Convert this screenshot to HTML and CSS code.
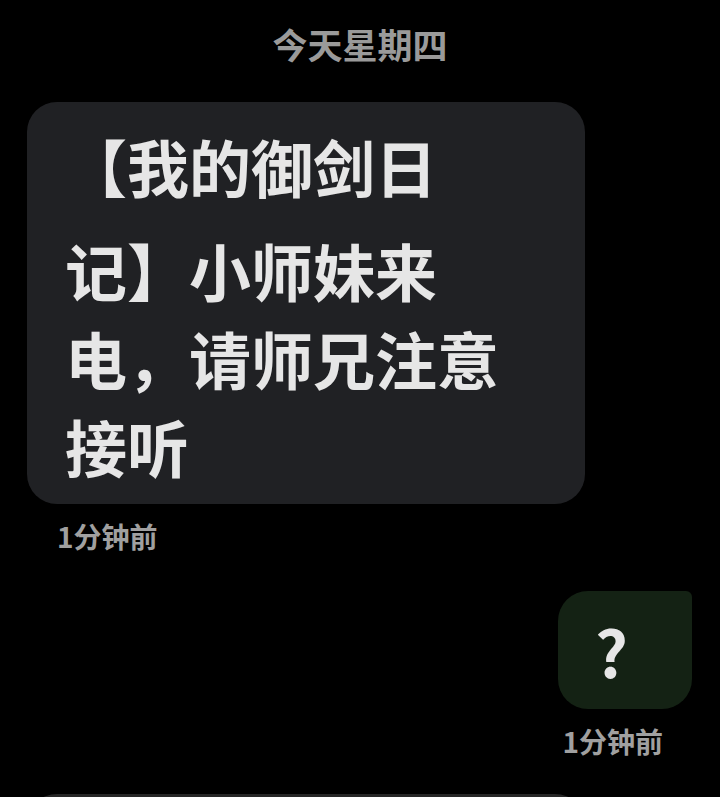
FILE: index.html
```html
<!DOCTYPE html>
<html lang="zh-CN">

<head>
    <meta charset="UTF-8">
    <meta name="viewport" content="width=device-width, initial-scale=1.0">
    <title>信息</title>
    <link rel="stylesheet" href="styles.css">
</head>

<body>
    <main class="thread">
        <div class="day-label">今天星期四</div>

        <div class="msg msg-in">
            <div class="bubble"><span class="first">【我的御剑日</span>记】小师妹来电，请师兄注意接听</div>
            <div class="msg-time">1分钟前</div>
        </div>

        <div class="msg msg-out">
            <div class="bubble">?</div>
            <div class="msg-time">1分钟前</div>
        </div>

        <div class="msg msg-in">
            <div class="bubble bubble-next"></div>
        </div>
    </main>
</body>

</html>
```

FILE: styles.css
```css
body {
    margin: 0;
    background: #000;
    font-family: "Noto Sans CJK SC", "Noto Sans", sans-serif;
    color: #e6e6e6;
}

.thread {
    width: 720px;
    height: 797px;
    overflow: hidden;
    display: flex;
    flex-direction: column;
}

.day-label {
    text-align: center;
    font-size: 35px;
    font-weight: 700;
    color: #9a9a9a;
    line-height: 48px;
    padding-top: 20px;
    margin-bottom: 34px;
}

.msg {
    display: flex;
    flex-direction: column;
}

.msg-in {
    align-items: flex-start;
    padding-left: 27px;
}

.msg-out {
    align-items: flex-end;
    padding-right: 28px;
    margin-top: 36px;
}

.msg-in .bubble {
    box-sizing: border-box;
    width: 558px;
    padding: 4px 78px 14px 38px;
    background: #202124;
    border-radius: 30px;
    font-size: 62px;
    font-weight: 700;
    line-height: 88px;
}

.msg-in .bubble .first {
    line-height: 120px;
}

.msg-out .bubble {
    box-sizing: border-box;
    width: 134px;
    height: 118px;
    padding-left: 37px;
    background: #142214;
    border-radius: 30px 6px 30px 30px;
    font-size: 64px;
    font-weight: 700;
    line-height: 118px;
}

.msg-time {
    font-size: 28px;
    font-weight: 700;
    color: #a0a0a0;
    line-height: 38px;
    margin-top: 13px;
}

.msg-in .msg-time {
    padding-left: 30px;
}

.msg-out .msg-time {
    padding-right: 29px;
}

.msg-in .bubble-next {
    height: 120px;
    margin-top: 34px;
    background: #262626;
}
```
